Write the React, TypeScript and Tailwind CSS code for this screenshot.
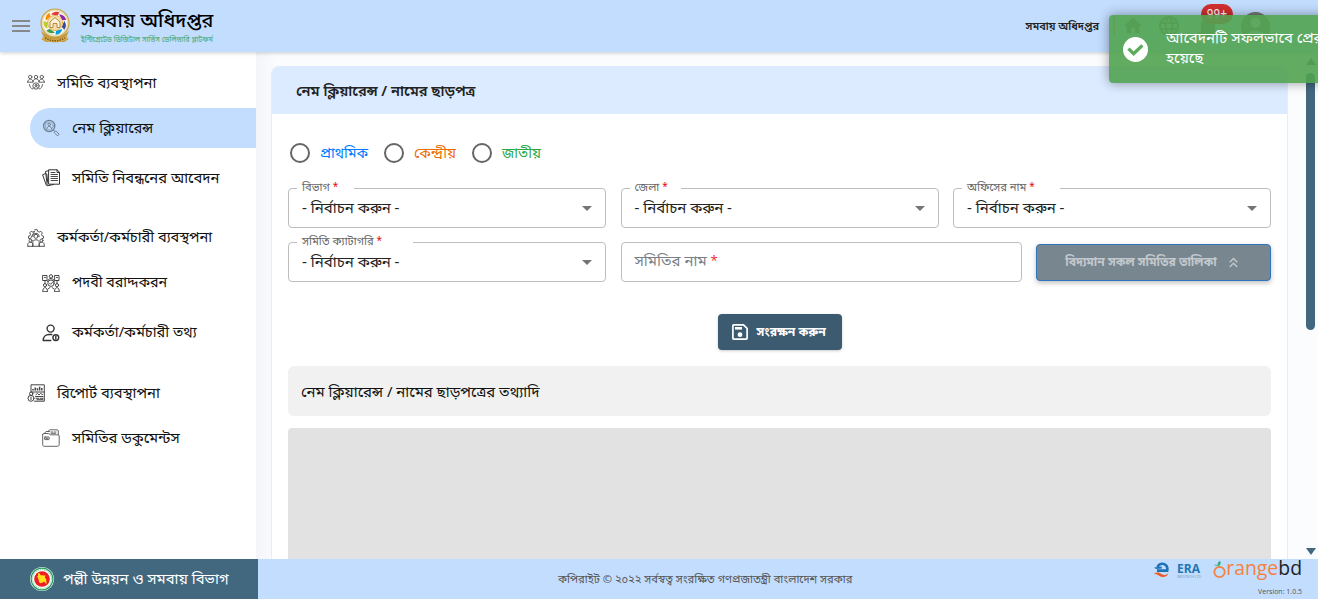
import React from "react";
import { MdHome, MdLanguage, MdNotifications, MdAccountCircle, MdArrowDropDown, MdOutlineKeyboardDoubleArrowUp } from "react-icons/md";

type IconProps = { className?: string };

const line = { fill: "none", stroke: "currentColor", strokeLinecap: "round", strokeLinejoin: "round" } as const;

function CommitteeIcon({ className }: IconProps) {
  return (
    <svg viewBox="0 0 18 18" className={className} {...line} strokeWidth="0.9">
      <circle cx="3.2" cy="3" r="1.7" />
      <circle cx="9" cy="3" r="1.7" />
      <circle cx="14.8" cy="3" r="1.7" />
      <path d="M.6 8.2c0-4 5.2-4 5.4-.6M6 8c0-4.400 6-4.400 6 0M12 7.600c.2-3.400 5.400-3.400 5.400.6M.6 8.200h5M12.400 8.200h5" />
      <circle cx="9" cy="12" r="3.200" />
      <path d="M7.300 14.200c0-2.200 3.400-2.200 3.400 0M2.500 10.500c.2 2.500 1.300 4 3.200 4.500M15.500 10.500c-.2 2.500-1.300 4-3.200 4.500" />
      <circle cx="9" cy="11.300" r="1" />
    </svg>
  );
}

function SearchNameIcon({ className }: IconProps) {
  return (
    <svg viewBox="0 0 18 18" className={className} {...line} strokeWidth="1">
      <circle cx="7.200" cy="7" r="5.600" strokeWidth="1.300" />
      <circle cx="7.200" cy="7" r="4" strokeWidth=".6" />
      <circle cx="7.200" cy="5.600" r="1.300" />
      <path d="M4.800 9.600c.3-3 4.500-3 4.800 0M11.200 10.800l1.600 1.400M12.400 13.200l1.300-1.300 3.400 3.200-1.300 1.500z" />
    </svg>
  );
}

function PapersIcon({ className }: IconProps) {
  return (
    <svg viewBox="0 0 18 18" className={className} {...line} strokeWidth="1">
      <path d="M7 .8h8.200l2.300 2.500v11.900H7zM15 .8v2.700h2.500" />
      <path d="M9 3.500h4M9 5.500h6.500M9 7.500h6.500M9 9.500h6.500M9 11.500h6.500" strokeWidth=".9" />
      <path d="M6.800 1.500l-3.300 1 1.800 14.300 6.200-1.300M3.500 4.500L.6 5.800l3.700 10.400M4.800 5l.9 8" />
    </svg>
  );
}

function GearTeamIcon({ className }: IconProps) {
  return (
    <svg viewBox="0 0 18 18" className={className} {...line} strokeWidth=".9">
      <path d="M7.800.7h2.400l.5 1.700 1.500.7 1.600-.9 1.500 1.700-.8 1.500.5 1.300 1.500.5v2l-1.500.5M3 9.700l-1.500-.5v-2L3 6.700l.5-1.300-.8-1.500 1.500-1.700 1.600.9 1.500-.7z" />
      <circle cx="9" cy="7.300" r="2" />
      <path d="M5.800 7.500c0-4.300 6.400-4.300 6.400 0" />
      <circle cx="3.500" cy="11.500" r="1.500" />
      <circle cx="14.500" cy="11.500" r="1.500" />
      <path d="M.8 17.200v-2c0-2.500 5-2.500 5 0v2M5.800 17.200v-4c0-3.200 6.400-3.200 6.400 0v4M12.200 17.200v-2c0-2.500 5-2.500 5 0v2M.8 17.300h16.400" />
    </svg>
  );
}

function AssignIcon({ className }: IconProps) {
  return (
    <svg viewBox="0 0 18 18" className={className} {...line} strokeWidth=".9">
      <circle cx="9" cy="2.400" r="1.700" />
      <path d="M5.600 7.500c0-4 6.800-4 6.800 0" />
      <circle cx="9" cy="9.200" r="3.200" />
      <path d="M7.600 9.200l1 1.100 2-2.200" />
      <path d="M1 1.500h4v5H1zM13 1.500h4v5h-4zM2.500 3.500h1M14.500 3.500h1M3 6.500v3M15 6.500v3" />
      <circle cx="3" cy="11.200" r="1.600" />
      <circle cx="15" cy="11.200" r="1.600" />
      <path d="M.7 17.300c0-5 4.800-5 4.800 0zM12.500 17.300c0-5 4.800-5 4.800 0zM6 15l2-1.500M12 15l-2-1.500" />
    </svg>
  );
}

function UserInfoIcon({ className }: IconProps) {
  return (
    <svg viewBox="0 0 18 18" className={className} {...line} strokeWidth="1.400">
      <circle cx="8.600" cy="4.600" r="3.500" />
      <path d="M8.800 16.500H1.200c0-3.800 2.600-6 6-6h2.600" />
      <circle cx="13.800" cy="13.600" r="2.900" />
      <path d="M13.800 12.300v2.700" />
    </svg>
  );
}

function ReportIcon({ className }: IconProps) {
  return (
    <svg viewBox="0 0 18 18" className={className} {...line} strokeWidth="1">
      <path d="M4 8V.8h13.300v16.400H7.500" />
      <path d="M6 6.500V5M8.200 6.500V3.500M10.400 6.500V4.200M12.600 6.500V2.800M14.800 6.500V4" strokeWidth="1.500" strokeLinecap="butt" />
      <path d="M4.500 8h12.500M9 10.500l1.500-1 1.500 1.500 1.500-1.500 2 1M8.500 12.500h7.500M9 14.300h3M13.500 14.300h2.500M10 15.700h6" />
      <circle cx="4.200" cy="9.700" r="1.700" />
      <circle cx="4" cy="14.300" r="3" />
      <path d="M4 13v2.600" />
    </svg>
  );
}

function FolderIcon({ className }: IconProps) {
  return (
    <svg viewBox="0 0 18 18" className={className} {...line} strokeWidth=".9">
      <path d="M.7 5.500v10.200c0 1 .5 1.600 1.500 1.600h13.300c1 0 1.700-.6 1.700-1.600V7c0-.8-.5-1.200-1.300-1.200H8.200L6.800 4.500H1.700c-.6 0-1 .4-1 1z" />
      <path d="M2.500 4.300L4 2.500h3.500M6 2.500L7.500.8H15c.8 0 1.300.5 1.300 1.200v3.500M9 3h2M9 4.300h4.500M12.500 3h1.500" />
      <rect x="2.600" y="8" width="4.600" height="2.600" rx=".5" />
      <path d="M3.800 9.300h2.200" />
    </svg>
  );
}

function CoopLogo() {
  const arms = ["#e53935", "#8e24aa", "#3949ab", "#039be5", "#43a047", "#c0ca33", "#fb8c00"];
  return (
    <svg viewBox="0 0 32 36" className="h-9 w-8">
      <path d="M2 22c1 4 2 6 4 8l-4 1 5 3 18 0 5-3-4-1c2-2 3-4 4-8-5 8-23 8-28 0z" fill="#c69a3c" />
      <circle cx="16" cy="15" r="14" fill="#eadfb6" stroke="#c9a545" strokeWidth="1.200" />
      <circle cx="16" cy="15" r="11.800" fill="#fff" />
      {arms.map((color, i) => (
        <path key={color} d="M12 6.500c2-3 6-3.500 8.500-2l-2 3z" fill={color} transform={`rotate(${i * 51.4} 16 15)`} />
      ))}
      <circle cx="16" cy="15" r="7.600" fill="#f3dfae" stroke="#d8a93c" strokeWidth=".8" />
      <path d="M11 14l5-4.500 5 4.500v5.500h-3v-4h-4v4h-3z" fill="#fbf3dc" stroke="#b58a3a" strokeWidth="1" />
      <path d="M4 28q12 7 24 0l1 3q-13 7-26 0z" fill="#d4ac50" />
      <path d="M6 30q10 5.500 20 0" stroke="#7a5a1c" strokeWidth="1.500" strokeDasharray="1.500 1" fill="none" />
    </svg>
  );
}

function GovSeal() {
  return (
    <svg viewBox="0 0 24 24" className="size-6">
      <circle cx="12" cy="12" r="12" fill="#f6fff9" />
      <circle cx="12" cy="12" r="10.900" fill="none" stroke="#2b9a61" strokeWidth="1.200" />
      <circle cx="12" cy="12" r="9.400" fill="none" stroke="#7fc4a0" strokeWidth="1" strokeDasharray="1.200 1" />
      <circle cx="12" cy="12" r="7.800" fill="#ee1c25" />
      <path d="M8 6l2 .8.500 1.500 5 .2-.7 2 1.400 1.700.3 5-1.300-1.300-1-1.500-2 1.300-1.800.5-1.200-1-1-3.800-1-1.800 1-1.200z" fill="#ffe21a" />
    </svg>
  );
}

function SaveIcon() {
  return (
    <svg viewBox="0 0 16 16" className="size-4" fill="none" stroke="#fff" strokeWidth="1.700" strokeLinejoin="round">
      <path d="M1.700.9h9.800L15.100 4.300v10c0 .5-.3.800-.8.800H1.700c-.5 0-.8-.3-.8-.8V1.700c0-.5.3-.8.800-.8z" />
      <path d="M3 4.300h7" strokeWidth="2.600" />
      <circle cx="8" cy="10.700" r="2.400" fill="#fff" stroke="none" />
    </svg>
  );
}

function ToastCheck() {
  return (
    <svg viewBox="0 0 24 24" className="size-[25px] shrink-0">
      <circle cx="12" cy="12" r="12" fill="#fff" />
      <path d="M5.200 11.200l5 4.800 8.400-8" fill="none" stroke="#5cab5c" strokeWidth="3.200" />
    </svg>
  );
}

const bangla = "font-['Noto_Sans_Bengali','Noto_Serif_Bengali','Noto_Sans',sans-serif]";

function Group({ icon, label, className }: { icon: React.ReactNode; label: string; className?: string }) {
  return (
    <div className={`flex h-10 items-center gap-3 pl-[27px] ${className ?? ""}`}>
      {icon}
      <span className="whitespace-nowrap pt-0.5 leading-[22px]">{label}</span>
    </div>
  );
}

function Item({ icon, label, className, active }: { icon: React.ReactNode; label: string; className?: string; active?: boolean }) {
  return (
    <div className={`ml-[30px] flex h-10 items-center gap-3 rounded-l-full pl-3 ${active ? "bg-[#c3ddff]" : ""} ${className ?? ""}`}>
      {icon}
      <span className="whitespace-nowrap pt-0.5 leading-[22px]">{label}</span>
    </div>
  );
}

function SelectField({ label, notch }: { label: string; notch: string }) {
  return (
    <fieldset className="-mt-1.5 h-[46px] min-w-0 rounded border border-[#bdbdbd]">
      <legend className={`ml-2 flex h-3 items-center whitespace-nowrap pl-[5px] text-[11.2px] leading-3 text-[#666] ${notch}`}>
        <span className="pt-px">{label}</span>&nbsp;<span className="text-[10px] text-red-600">*</span>
      </legend>
      <div className="flex h-[27px] items-center justify-between pl-[13px] pr-1.5">
        <span className="pt-[3px] text-[15px] leading-[27px] text-[#222]">- নির্বাচন করুন -</span>
        <MdArrowDropDown className="size-6 text-[#757575]" />
      </div>
    </fieldset>
  );
}

function Radio({ label, className }: { label: string; className: string }) {
  return (
    <label className="flex items-center gap-2.5">
      <span className="size-5 rounded-full border-2 border-[#666]" />
      <span className={`whitespace-nowrap pt-[3px] text-[14.3px] ${className}`}>{label}</span>
    </label>
  );
}

export default function App() {
  return (
    <div className={`relative flex h-[599px] w-[1318px] flex-col overflow-hidden bg-white text-[#222] ${bangla}`}>
      <header className="z-10 flex h-[52px] shrink-0 items-center bg-[#c3ddff] shadow-[0_1px_4px_rgba(0,0,0,0.2)]">
        <div className="ml-3 flex h-3 w-[18px] flex-col justify-between">
          <i className="h-0.5 bg-[#888]" />
          <i className="h-0.5 bg-[#888]" />
          <i className="h-0.5 bg-[#888]" />
        </div>
        <div className="ml-[9px]"><CoopLogo /></div>
        <div className="ml-2.5 flex flex-col whitespace-nowrap pt-[3px]">
          <span className="text-[19.8px] font-medium leading-[26px] text-black">সমবায় অধিদপ্তর</span>
          <span className="text-[7.2px] leading-[11px] text-[#3fa565]">ইন্টিগ্রেটেড ডিজিটাল সার্ভিস ডেলিভারি প্লাটফর্ম</span>
        </div>
        <div className="ml-auto flex items-center">
          <span className="whitespace-nowrap pt-0.5 text-[10.9px] font-semibold">সমবায় অধিদপ্তর</span>
          <span className="ml-[14px] h-[18px] w-0.5 bg-[#d98686]" />
          <MdHome className="ml-[7px] size-[22px] text-[#777]" />
          <MdLanguage className="ml-[13px] size-6 text-[#777]" />
          <div className="relative ml-[13px]">
            <MdNotifications className="size-7 text-[#777]" />
            <span className="absolute left-[7px] top-[-8px] flex h-5 w-8 items-center justify-center rounded-full bg-[#d32f2f] font-['Roboto',sans-serif] text-[12px] text-white">99+</span>
          </div>
          <MdAccountCircle className="ml-4 mr-[45px] size-[35px] text-[#777]" />
        </div>
      </header>

      <div className="flex h-[507px] shrink-0">
        <nav className="w-64 shrink-0 bg-white pt-[11px] text-[14.8px] text-[#111]">
          <Group icon={<CommitteeIcon className="size-[18px] text-[#555]" />} label="সমিতি ব্যবস্থাপনা" />
          <Item active className="mt-[5px]" icon={<SearchNameIcon className="size-[18px] text-[#6d7f95]" />} label="নেম ক্লিয়ারেন্স" />
          <Item className="mt-2.5" icon={<PapersIcon className="size-[18px] text-[#333]" />} label="সমিতি নিবন্ধনের আবেদন" />
          <Group className="mt-5 text-[14.6px]" icon={<GearTeamIcon className="size-[18px] text-[#444]" />} label="কর্মকর্তা/কর্মচারী ব্যবস্থপনা" />
          <Item className="mt-[5px] text-[14.3px]" icon={<AssignIcon className="size-[18px] text-[#333]" />} label="পদবী বরাদ্দকরন" />
          <Item className="mt-2.5 text-[14.6px]" icon={<UserInfoIcon className="size-[18px] text-[#333]" />} label="কর্মকর্তা/কর্মচারী তথ্য" />
          <Group className="mt-5" icon={<ReportIcon className="size-[18px] text-[#444]" />} label="রিপোর্ট ব্যবস্থাপনা" />
          <Item className="mt-[5px]" icon={<FolderIcon className="size-[18px] text-[#555]" />} label="সমিতির ডকুমেন্টস" />
        </nav>

        <main className="flex min-w-0 flex-1 bg-gradient-to-r from-[#f4f5f8] via-[#fbfcfe] via-2% to-[#fbfcfe] pl-[15px] pt-3.5">
          <section className="h-[600px] w-[1017px] overflow-hidden rounded-t-lg border-x border-[#ececf0] bg-white">
            <h1 className="flex h-12 items-center bg-[#dcebff] pl-6 pt-1.5 text-[14.6px] font-semibold text-[#222]">নেম ক্লিয়ারেন্স / নামের ছাড়পত্র</h1>
            <div className="px-4">
              <div className="ml-0.5 mt-[27px] flex h-6 items-center gap-4">
                <Radio label="প্রাথমিক" className="text-[#007bff]" />
                <Radio label="কেন্দ্রীয়" className="text-[#ed6c02]" />
                <Radio label="জাতীয়" className="text-[#28a745]" />
              </div>
              <div className="mt-[23px] grid grid-cols-3 gap-x-[14.5px]">
                <SelectField label="বিভাগ" notch="w-[57px]" />
                <SelectField label="জেলা" notch="w-[51px]" />
                <SelectField label="অফিসের নাম" notch="w-[98px]" />
              </div>
              <div className="mt-3.5 grid grid-cols-[318px_401px_235px] gap-x-[14.5px]">
                <SelectField label="সমিতি ক্যাটাগরি" notch="w-[116px]" />
                <div className="flex h-10 items-center rounded border border-[#bdbdbd] pl-[13px] text-[15px] text-[#7a7f87]">
                  সমিতির নাম&nbsp;<span className="text-[13px] text-red-500">*</span>
                </div>
                <button className="mt-0.5 flex h-[37px] items-center justify-center gap-2 rounded border border-[#2f74bd] bg-[#78868f] text-[12.1px] font-bold text-[#c3c8cc] shadow-[0_2px_5px_rgba(0,0,0,0.25)]">
                  <span className="whitespace-nowrap pt-px">বিদ্যমান সকল সমিতির তালিকা</span>
                  <MdOutlineKeyboardDoubleArrowUp className="size-[17px]" />
                </button>
              </div>
              <button className="mx-auto mt-8 flex h-9 w-[124px] items-center gap-[9px] rounded bg-[#3c5b70] pl-3.5 text-[12.1px] font-bold text-white shadow-[0_1px_3px_rgba(0,0,0,0.2)]">
                <SaveIcon />
                <span className="whitespace-nowrap pt-0.5">সংরক্ষন করুন</span>
              </button>
              <h2 className="mt-4 flex h-[50px] items-center rounded-md bg-[#f1f1f1] pl-[13px] pt-1 text-[14.95px] text-[#111]">নেম ক্লিয়ারেন্স / নামের ছাড়পত্রের তথ্যাদি</h2>
              <div className="mt-3 h-48 rounded bg-[#e2e2e2]" />
            </div>
          </section>
          <div className="-mt-3.5 ml-auto mr-[3px] flex w-[9px] flex-col items-center">
            <i className="mt-1.5 h-0 w-0 border-x-[5px] border-b-[7px] border-x-transparent border-b-[#42687f]" />
            <i className="mt-2 h-[257px] w-[9px] rounded-full bg-[#42687f]" />
            <i className="mb-1 mt-auto h-0 w-0 border-x-[5px] border-t-[7px] border-x-transparent border-t-[#42687f]" />
          </div>
        </main>
      </div>

      <footer className="flex h-10 shrink-0 bg-[#c3ddff]">
        <div className="flex w-[258px] items-center gap-[9px] bg-[#42687f] pl-[30px] text-[14.9px] text-white">
          <GovSeal />
          <span className="whitespace-nowrap pt-0.5">পল্লী উন্নয়ন ও সমবায় বিভাগ</span>
        </div>
        <div className="flex flex-1 items-center pl-[300px] pt-1 text-[11.2px] text-[#555]">
          <span className="whitespace-nowrap">কপিরাইট © ২০২২ সর্বস্বত্ব সংরক্ষিত গণপ্রজাতন্ত্রী বাংলাদেশ সরকার</span>
        </div>
        <div className="flex w-[164px] flex-col pr-4">
          <div className="flex h-[22px] items-center">
            <svg viewBox="0 0 16 16" className="size-4 shrink-0" fill="none">
              <path d="M3 8.600h10.200C14.200 4.200 11 1.600 7.800 1.800 5.800 2 4.200 3.200 3.500 5" stroke="#1d72b8" strokeWidth="2.600" />
              <path d="M0 5.500L7.500 4.500 8 6.500 2 7z" fill="#1d72b8" />
              <path d="M0 12c3-2.500 5.500-1.500 7.500 0 2.500 1.800 5 1.200 7-1-1 3.500-4.500 5-8 3.500C4.500 13.500 3 11.500 0 12z" fill="#f05a28" />
            </svg>
            <div className="ml-[7px] flex w-[25px] flex-col font-['Open_Sans',sans-serif]">
              <span className="text-[12px] font-bold leading-[13px] text-[#2176b5]">ERA</span>
              <span className="whitespace-nowrap text-[3.500px] leading-[4px] text-[#6f8fb0]">INFOTECH LTD</span>
            </div>
            <svg viewBox="0 0 13 18" className="ml-3 h-[18px] w-[13px] shrink-0" fill="none">
              <circle cx="6.500" cy="11" r="5.200" stroke="#f5813f" strokeWidth="1.800" />
              <path d="M5.500 5C4.500 3 5 1 7 .5c.5 2 0 3.500-1.500 4.500zM5 4.500L1.500 4" stroke="#31a878" fill="#31a878" strokeWidth=".8" />
            </svg>
            <span className="-mt-1 font-['Open_Sans',sans-serif] text-[19.4px] leading-5 text-[#f5813f]">range<span className="text-[#222]">bd</span></span>
          </div>
          <span className="mt-1.5 self-end font-['Open_Sans',sans-serif] text-[7px] leading-[10px] text-[#555]">Version: 1.0.5</span>
        </div>
      </footer>

      <div className="absolute left-[1109px] top-[15px] z-20 flex h-[68px] w-[260px] items-center rounded bg-[#51a351]/90 pl-3.5 text-white shadow-[0_0_12px_rgba(0,0,0,0.4)]">
        <ToastCheck />
        <p className="ml-[18px] whitespace-nowrap text-[15px] leading-5">আবেদনটি সফলভাবে প্রেরণ করা<br />হয়েছে</p>
      </div>
    </div>
  );
}
